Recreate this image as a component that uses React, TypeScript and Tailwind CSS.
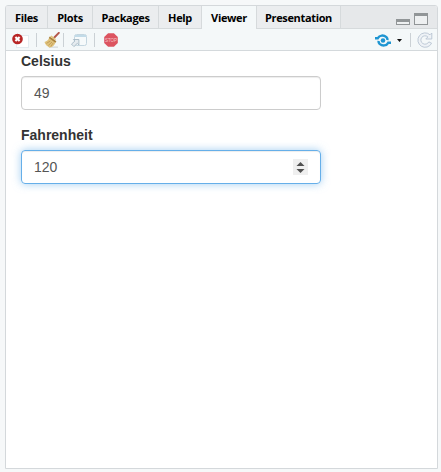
import React from "react";

const tabs = [
  { name: "Files", width: "w-[42px]" },
  { name: "Plots", width: "w-[45px]" },
  { name: "Packages", width: "w-[66px]" },
  { name: "Help", width: "w-[43px]" },
  { name: "Viewer", width: "w-[55px]", active: true },
  { name: "Presentation", width: "w-[84px]" },
];

function TabBar() {
  return (
    <div className="flex h-[23px] shrink-0 bg-[#e6e8ea]">
      {tabs.map((tab) => (
        <div
          key={tab.name}
          className={`${tab.width} flex shrink-0 justify-center whitespace-nowrap border-r border-[#d6dadc] pt-[4px] font-['Open_Sans',sans-serif] text-[11px] leading-[16px] font-bold tracking-[-0.35px] text-black ${
            tab.active ? "bg-[#f4f8f9]" : "border-b bg-[#ebedef]"
          }`}
        >
          {tab.name}
        </div>
      ))}
      <div className="flex flex-1 items-start justify-end gap-[4px] border-b border-[#d6dadc] pr-[9px] pt-[7px]">
        <div className="mt-[6px] h-[6px] w-[14px] border border-t-3 border-[#919597] bg-[#eef0f1]" />
        <div className="h-[12px] w-[14px] border border-t-3 border-[#919597] bg-[#eef0f1]" />
      </div>
    </div>
  );
}

function Separator() {
  return <div className="h-[14px] w-px shrink-0 bg-[#cbd1d5]" />;
}

function RemoveIcon() {
  return (
    <svg className="h-4 w-[18px]" viewBox="0 0 18 16">
      <rect x="4.5" y="3.5" width="12" height="12" fill="#fff" stroke="#e4ebf0" />
      <circle cx="5.5" cy="7" r="5.3" fill="#b82626" />
      <path d="M3.4 4.9 7.6 9.1M7.6 4.9 3.4 9.1" stroke="#fff" strokeWidth="2.1" />
    </svg>
  );
}

function BroomIcon() {
  return (
    <svg className="h-4 w-4" viewBox="0 0 16 16">
      <path d="M5 15.2h9" stroke="#d3d8d9" strokeWidth="1.2" />
      <path d="M9.6 6.2 14.8.9" stroke="#b4584c" strokeWidth="2" strokeLinecap="round" />
      <path d="M5.2 5.7C4.4 8 2.8 9.1.5 10.1c.8 2.3 2.4 4.3 4.7 5.3 3.2.2 5.7-2 6.4-5.6z" fill="#dfc27c" />
      <path d="m2.4 11.4 4-2.4M4.4 13.4l3.6-3.4M6.8 14.5l2.4-3.6" stroke="#be9650" strokeWidth=".8" />
      <path d="m5.8 4.4 6.6 4.8-1 1.5-6.6-4.7z" fill="#a9813c" />
      <path d="m7.4 3.6 4.5 3.4-.6 1.2-5.2-3.5z" fill="#e0c47c" />
    </svg>
  );
}

function WindowIcon() {
  return (
    <svg className="h-4 w-4" viewBox="0 0 16 16">
      <rect x="3.5" y="2.5" width="12" height="11" rx="2" fill="#f6fafb" stroke="#c4d6e0" />
      <path d="M4 4h11" stroke="#c2dbe8" strokeWidth="2" />
      <path d="M.5 12.1 3.9 9 2.4 7.5h5.5V13l-1.6-1.6-3.4 3.2z" fill="#e5ebef" stroke="#a5b8c4" strokeWidth=".9" />
    </svg>
  );
}

function StopIcon() {
  return (
    <svg className="h-[14px] w-[14px] overflow-visible" viewBox="0 0 14 14">
      <path d="M4.1.2h5.8l3.9 3.9v5.8l-3.9 3.9H4.1L.2 9.9V4.1z" fill="#dc5460" />
      <text x="7" y="9" textAnchor="middle" className="fill-[#f5c5c9] font-['Liberation_Sans',sans-serif] text-[4.5px] leading-none">
        STOP
      </text>
    </svg>
  );
}

function PublishIcon() {
  return (
    <svg className="h-[13px] w-4" viewBox="0 0 16 13">
      <g fill="none" stroke="#1e95d2">
        <path d="M0 4.2h2.8C4.6 1 8.6.8 11.4 3.2c.9.9 1.2 1.8 1.1 3" strokeWidth="2.4" />
        <path d="M16 8.8h-2.8c-1.8 3.2-5.8 3.4-8.6 1-.9-.9-1.2-1.8-1.1-3" strokeWidth="2.4" />
      </g>
      <circle cx="8" cy="6.5" r="2.3" fill="#1e95d2" />
    </svg>
  );
}

function RefreshIcon() {
  return (
    <svg className="h-4 w-4" viewBox="0 0 16 16">
      <path d="M14.6 11.2A7.2 7.2 0 1 1 13 2.8L14.8 1v6H8.8l2.1-2.1a4.2 4.2 0 1 0 .9 5z" fill="#eef2f6" stroke="#b8c4d2" strokeWidth=".9" strokeLinejoin="round" />
    </svg>
  );
}

function Toolbar() {
  return (
    <div className="flex h-[22px] shrink-0 items-center border-b border-[#d4d9dc] bg-[#f4f8f9] pl-[6px] pr-[4px]">
      <RemoveIcon />
      <div className="ml-[6px]"><Separator /></div>
      <div className="ml-[7px]"><BroomIcon /></div>
      <div className="ml-[3px]"><Separator /></div>
      <div className="ml-[7px]"><WindowIcon /></div>
      <div className="ml-[7px]"><Separator /></div>
      <div className="ml-[9px]"><StopIcon /></div>
      <div className="ml-auto mt-px"><PublishIcon /></div>
      <svg className="ml-[6px] mt-[2px] h-[3px] w-[5px]" viewBox="0 0 5 3">
        <path d="M0 0h5L2.5 3z" fill="#111" />
      </svg>
      <div className="ml-[8px]"><Separator /></div>
      <div className="ml-[6px]"><RefreshIcon /></div>
    </div>
  );
}

export default function App() {
  return (
    <div className="h-[472px] w-[441px] bg-[#f6f8f9] pl-[5px] pt-[5px]">
      <main className="flex h-[464px] w-[433px] flex-col overflow-hidden rounded-t-[3px] border border-[#d4d8db] bg-white">
        <TabBar />
        <Toolbar />
        <form className="flex w-[315px] flex-col pl-[15px] font-['Liberation_Sans',Arial,sans-serif] text-[14px] leading-[20px] text-[#333]">
          <label className="font-bold">Celsius</label>
          <div className="mt-[5px] flex h-[34px] items-center rounded-[4px] border border-[#ccc] px-[12px] text-[#555] shadow-[inset_0_1px_1px_rgba(0,0,0,0.075)]">
            49
          </div>
          <label className="mt-[15px] font-bold">Fahrenheit</label>
          <div className="mt-[5px] flex h-[34px] items-center justify-between rounded-[4px] border border-[#66afe9] px-[12px] text-[#555] shadow-[inset_0_1px_1px_rgba(0,0,0,0.075),0_0_8px_rgba(102,175,233,0.6)]">
            120
            <svg className="h-4 w-[15px] bg-[#efefef]" viewBox="0 0 15 16">
              <path d="M3.5 7h8l-4-4zM3.5 10h8l-4 4z" fill="#505050" />
            </svg>
          </div>
        </form>
      </main>
    </div>
  );
}
